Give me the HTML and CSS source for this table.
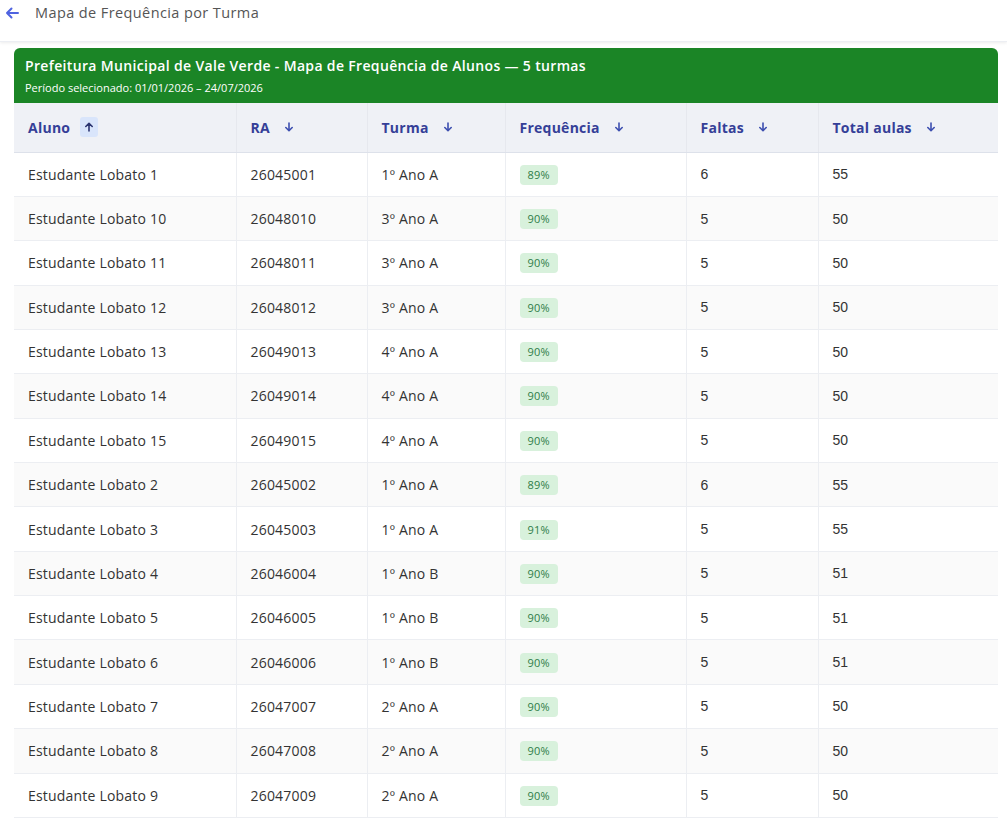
FILE: index.html
```html
<!DOCTYPE html>
<html lang="pt-BR">
<head>
<meta charset="utf-8">
<title>Mapa de Frequência por Turma</title>
<link rel="stylesheet" href="styles.css">
</head>
<body>
<header class="topbar">
  <svg class="back" width="14" height="12" viewBox="0 0 14 12"><path d="M13 6H2M6.5 1.5L2 6l4.5 4.5" fill="none" stroke="#4f63e0" stroke-width="2" stroke-linecap="round" stroke-linejoin="round"/></svg>
  <span class="page-title">Mapa de Frequência por Turma</span>
</header>
<main class="main">
  <section class="card">
    <div class="card-head">
      <div class="card-title">Prefeitura Municipal de Vale Verde - Mapa de Frequência de Alunos — 5 turmas</div>
      <div class="card-sub">Período selecionado: 01/01/2026 – 24/07/2026</div>
    </div>
    <table class="grid">
      <colgroup>
        <col class="c1"><col class="c2"><col class="c3"><col class="c4"><col class="c5"><col class="c6">
      </colgroup>
      <thead>
        <tr>
          <th><span class="th">Aluno <span class="sort active"><svg width="10" height="10" viewBox="0 0 10 10"><path d="M5 9V1.5M1.8 4.5L5 1.3l3.2 3.2" fill="none" stroke="#2b3470" stroke-width="1.6" stroke-linecap="round" stroke-linejoin="round"/></svg></span></span></th>
          <th><span class="th">RA <span class="sort"><svg width="10" height="10" viewBox="0 0 10 10"><path d="M5 1v7.5M1.8 5.5L5 8.7l3.2-3.2" fill="none" stroke="#3d4fb0" stroke-width="1.6" stroke-linecap="round" stroke-linejoin="round"/></svg></span></span></th>
          <th><span class="th">Turma <span class="sort"><svg width="10" height="10" viewBox="0 0 10 10"><path d="M5 1v7.5M1.8 5.5L5 8.7l3.2-3.2" fill="none" stroke="#3d4fb0" stroke-width="1.6" stroke-linecap="round" stroke-linejoin="round"/></svg></span></span></th>
          <th><span class="th">Frequência <span class="sort"><svg width="10" height="10" viewBox="0 0 10 10"><path d="M5 1v7.5M1.8 5.5L5 8.7l3.2-3.2" fill="none" stroke="#3d4fb0" stroke-width="1.6" stroke-linecap="round" stroke-linejoin="round"/></svg></span></span></th>
          <th><span class="th">Faltas <span class="sort"><svg width="10" height="10" viewBox="0 0 10 10"><path d="M5 1v7.5M1.8 5.5L5 8.7l3.2-3.2" fill="none" stroke="#3d4fb0" stroke-width="1.6" stroke-linecap="round" stroke-linejoin="round"/></svg></span></span></th>
          <th><span class="th">Total aulas <span class="sort"><svg width="10" height="10" viewBox="0 0 10 10"><path d="M5 1v7.5M1.8 5.5L5 8.7l3.2-3.2" fill="none" stroke="#3d4fb0" stroke-width="1.6" stroke-linecap="round" stroke-linejoin="round"/></svg></span></span></th>
        </tr>
      </thead>
      <tbody>
        <tr><td>Estudante Lobato 1</td><td>26045001</td><td>1º Ano A</td><td><span class="badge">89%</span></td><td class="num">6</td><td class="num">55</td></tr>
        <tr><td>Estudante Lobato 10</td><td>26048010</td><td>3º Ano A</td><td><span class="badge">90%</span></td><td class="num">5</td><td class="num">50</td></tr>
        <tr><td>Estudante Lobato 11</td><td>26048011</td><td>3º Ano A</td><td><span class="badge">90%</span></td><td class="num">5</td><td class="num">50</td></tr>
        <tr><td>Estudante Lobato 12</td><td>26048012</td><td>3º Ano A</td><td><span class="badge">90%</span></td><td class="num">5</td><td class="num">50</td></tr>
        <tr><td>Estudante Lobato 13</td><td>26049013</td><td>4º Ano A</td><td><span class="badge">90%</span></td><td class="num">5</td><td class="num">50</td></tr>
        <tr><td>Estudante Lobato 14</td><td>26049014</td><td>4º Ano A</td><td><span class="badge">90%</span></td><td class="num">5</td><td class="num">50</td></tr>
        <tr><td>Estudante Lobato 15</td><td>26049015</td><td>4º Ano A</td><td><span class="badge">90%</span></td><td class="num">5</td><td class="num">50</td></tr>
        <tr><td>Estudante Lobato 2</td><td>26045002</td><td>1º Ano A</td><td><span class="badge">89%</span></td><td class="num">6</td><td class="num">55</td></tr>
        <tr><td>Estudante Lobato 3</td><td>26045003</td><td>1º Ano A</td><td><span class="badge">91%</span></td><td class="num">5</td><td class="num">55</td></tr>
        <tr><td>Estudante Lobato 4</td><td>26046004</td><td>1º Ano B</td><td><span class="badge">90%</span></td><td class="num">5</td><td class="num">51</td></tr>
        <tr><td>Estudante Lobato 5</td><td>26046005</td><td>1º Ano B</td><td><span class="badge">90%</span></td><td class="num">5</td><td class="num">51</td></tr>
        <tr><td>Estudante Lobato 6</td><td>26046006</td><td>1º Ano B</td><td><span class="badge">90%</span></td><td class="num">5</td><td class="num">51</td></tr>
        <tr><td>Estudante Lobato 7</td><td>26047007</td><td>2º Ano A</td><td><span class="badge">90%</span></td><td class="num">5</td><td class="num">50</td></tr>
        <tr><td>Estudante Lobato 8</td><td>26047008</td><td>2º Ano A</td><td><span class="badge">90%</span></td><td class="num">5</td><td class="num">50</td></tr>
        <tr><td>Estudante Lobato 9</td><td>26047009</td><td>2º Ano A</td><td><span class="badge">90%</span></td><td class="num">5</td><td class="num">50</td></tr>
      </tbody>
    </table>
  </section>
</main>
</body>
</html>
```
FILE: styles.css
```css
* { box-sizing: border-box; }
html, body { margin: 0; padding: 0; background: #ffffff; }
body {
  font-family: "Open Sans", "Noto Sans", "Liberation Sans", sans-serif;
  color: #333333;
  overflow: hidden;
}
.topbar {
  height: 42px;
  display: flex;
  align-items: flex-start;
  padding: 4px 0 0 5px;
  gap: 16px;
  background: #ffffff;
  box-shadow: 0 1px 3px rgba(0, 0, 0, 0.08);
  border-bottom: 1px solid #eceef3;
}
.back { margin-top: 3px; }
.page-title {
  font-size: 14.5px;
  line-height: 18px;
  letter-spacing: 0.4px;
  color: #555555;
}
.main { padding: 6px 9px 0 14px; }
.card { background: #ffffff; }
.card-head {
  background: #1b8526;
  color: #ffffff;
  border-radius: 6px 6px 0 0;
  padding: 8px 11px 9px;
  height: 55px;
}
.card-title {
  font-size: 14px;
  font-weight: 600;
  line-height: 19px;
  letter-spacing: 0.34px;
}
.card-sub {
  font-size: 11px;
  line-height: 15px;
  margin-top: 5px;
}
.grid {
  width: 100%;
  border-collapse: collapse;
  table-layout: fixed;
}
.c1 { width: 222px; }
.c2 { width: 131px; }
.c3 { width: 138px; }
.c4 { width: 181px; }
.c5 { width: 132px; }
.c6 { width: auto; }
.grid th {
  background: #eff1f6;
  height: 49px;
  text-align: left;
  padding: 0 14px;
  border-right: 1px solid #e6e8ee;
  border-bottom: 1px solid #dde1ea;
  font-size: 14px;
  font-weight: 700;
  letter-spacing: 0.25px;
  color: #353f98;
}
.grid th:last-child, .grid td:last-child { border-right: none; }
.th { display: inline-flex; align-items: center; gap: 10px; }
.sort {
  display: inline-flex;
  align-items: center;
  justify-content: center;
  width: 18px;
  height: 20px;
  border-radius: 3px;
}
.sort.active { background: #d9e5fb; }
.grid td {
  height: 44.36px;
  padding: 0 14px;
  font-size: 14px;
  letter-spacing: 0.2px;
  border-right: 1px solid #eceef2;
  border-bottom: 1px solid #eceef2;
  color: #333333;
  white-space: nowrap;
}
.grid tbody tr:nth-child(even) td { background: #fafafa; }
.grid td.num { font-family: "Liberation Sans", Arial, sans-serif; letter-spacing: 0; }
.badge {
  display: inline-block;
  background: #d8f1dc;
  color: #2f7d48;
  font-size: 11px;
  line-height: 20px;
  padding: 0 8px;
  border-radius: 4px;
  letter-spacing: 0.2px;
}
```
